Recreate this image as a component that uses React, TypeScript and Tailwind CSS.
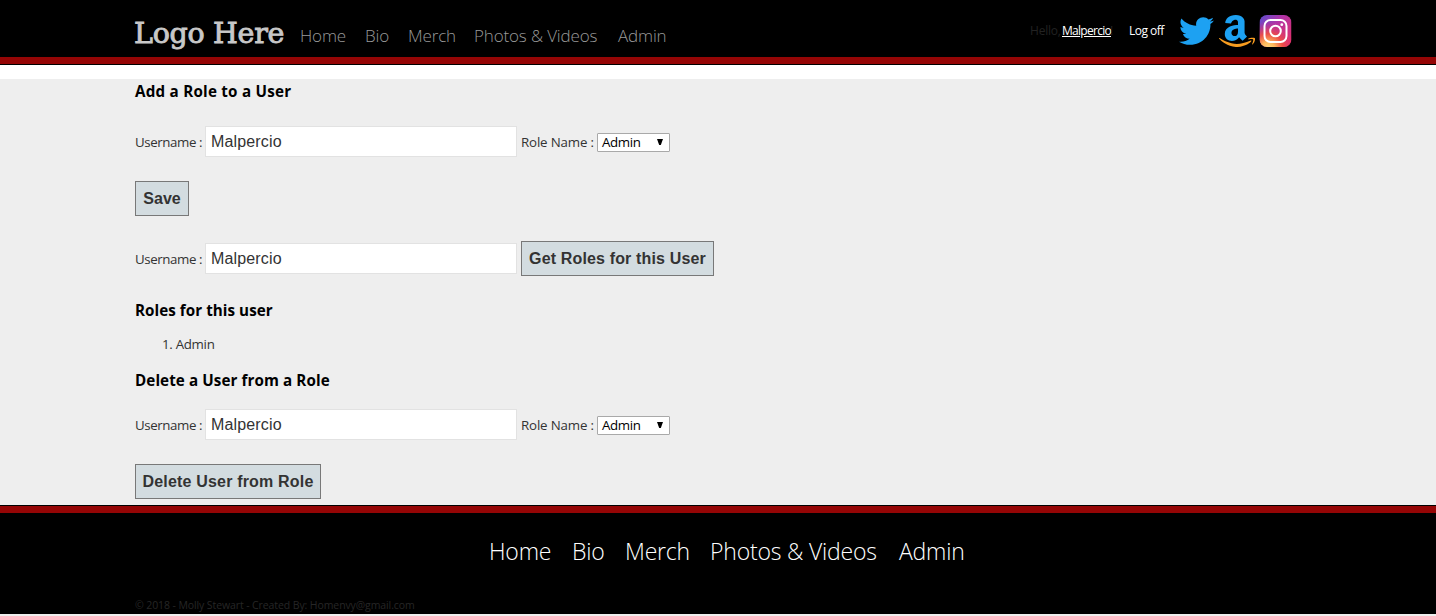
import type { ReactNode } from 'react';
import { FaTwitter } from 'react-icons/fa';

function AmazonIcon() {
  return (
    <svg className="ml-[5px] h-8 w-9" viewBox="7 32 433 448" preserveAspectRatio="none">
      <path
        fill="#1da1f2"
        fillRule="evenodd"
        transform="translate(-6 -2) scale(.94 1.07)"
        d="M257.2 162.7c-48.7 1.8-169.5 15.5-169.5 117.5 0 109.5 138.3 114 183.5 43.2 6.5 10.2 35.4 37.5 45.3 46.8l56.8-56S341 288.9 341 261.4V114.3C341 89 316.5 32 228.7 32 140.7 32 94 87 94 136.3l73.5 6.8c16.3-49.5 54.2-49.5 54.2-49.5 40.7-.1 35.5 29.8 35.5 69.1zm0 86.8c0 80-84.2 68-84.2 17.2 0-47.2 50.5-56.7 84.2-57.8v40.6z"
      />
      <path
        fill="#f79c1f"
        transform="translate(0 -67) scale(1 1.14)"
        d="M393.2 413c-7.7 10-70 67-174.5 67S34.2 408.5 9.7 379c-6.8-7.7 1-11.3 5.5-8.3C88.5 415.2 203 488.5 387.7 401c7.5-3.7 13.3 2 5.5 12zm39.8 2.2c-6.5 15.8-16 26.8-21.2 31-5.5 4.5-9.5 2.7-6.5-3.8s19.3-46.5 12.7-55c-6.5-8.3-37-4.3-48-3.2-10.8 1-13 2-14-.3-2.3-5.7 21.7-15.5 37.5-17.5 15.7-1.8 41-.8 46 5.7 3.7 5.1 0 27.1-6.5 43.1z"
      />
    </svg>
  );
}

function InstagramIcon() {
  return (
    <svg className="ml-[5px] h-8 w-8 -translate-x-[0.5px]" viewBox="0 0 32 32" fill="none">
      <defs>
        <linearGradient id="ig-base" x1="0" y1="0" x2="1" y2=".8">
          <stop offset="0" stopColor="#5b4fd0" />
          <stop offset=".45" stopColor="#b133a8" />
          <stop offset="1" stopColor="#e0306a" />
        </linearGradient>
        <radialGradient id="ig-warm" cx=".27" cy="1.05" r=".85">
          <stop offset="0" stopColor="#ffdc80" />
          <stop offset=".25" stopColor="#fdb75a" />
          <stop offset=".55" stopColor="#f0503f" stopOpacity=".9" />
          <stop offset="1" stopColor="#d62f7b" stopOpacity="0" />
        </radialGradient>
      </defs>
      <rect width="32" height="32" rx="7.5" fill="url(#ig-base)" />
      <rect width="32" height="32" rx="7.5" fill="url(#ig-warm)" />
      <rect x="5" y="5" width="22" height="22" rx="6" stroke="#fff" strokeWidth="2" />
      <circle cx="16" cy="16" r="5.3" stroke="#fff" strokeWidth="2" />
      <circle cx="22.3" cy="9.7" r="1.4" fill="#fff" />
    </svg>
  );
}

function Heading({ className = '', children }: { className?: string; children: ReactNode }) {
  return <h3 className={`h-6 text-[15.2px] leading-6 font-bold text-black ${className}`}>{children}</h3>;
}

function UsernameField({ children }: { children?: ReactNode }) {
  return (
    <div className="flex h-[35px] items-center">
      <label className="w-[70px] pt-0.5 text-[13.3px] tracking-[-0.4px]">Username :</label>
      <input
        className="h-[31px] w-[312px] border border-[#e2e2e2] bg-white px-[5px] font-['Liberation_Sans',sans-serif] text-base tracking-[0.15px] text-[#333] outline-none"
        defaultValue="Malpercio"
      />
      {children}
    </div>
  );
}

function RoleSelect() {
  return (
    <>
      <label className="ml-1 w-[76px] pt-0.5 text-[13.3px] tracking-[-0.15px]">Role Name :</label>
      <button className="mt-0.5 flex h-[19px] w-[73px] items-center justify-between rounded-[1px] border border-[#a9a9a9] bg-white pr-[6px] pl-1 text-[13.3px] tracking-[-0.35px] text-black">
        <span className="-mt-px leading-4">Admin</span>
        <svg className="-mt-px h-[6px] w-[6px]" viewBox="0 0 6 6">
          <path d="M0 0h6L3.8 6H2.2z" fill="#000" />
        </svg>
      </button>
    </>
  );
}

function Button({ className, children }: { className: string; children: ReactNode }) {
  return (
    <button
      className={`h-[35px] border border-[#787878] bg-[#d3dce0] font-['Liberation_Sans',sans-serif] text-base font-semibold text-[#333] ${className}`}
    >
      {children}
    </button>
  );
}

export default function App() {
  return (
    <div className="h-[616px] overflow-hidden bg-[#eee] font-['Open_Sans',sans-serif] text-[#333] whitespace-nowrap">
      <header className="border-b border-black bg-white">
        <div className="flex h-[57px] bg-black pl-[134px]">
          <a className="h-[57px] w-[166px] pt-[15px] font-['DejaVu_Serif',serif] text-[28.5px] leading-[38px] tracking-[-0.3px] text-[#c8c8c8] [-webkit-text-stroke:0.9px_#c8c8c8]">
            Logo Here
          </a>
          <nav className="flex w-[730px] pt-[24px] text-[17px] leading-[24px] font-light tracking-[-0.15px] text-[#999]">
            <a className="w-[65px]">Home</a>
            <a className="w-[43px]">Bio</a>
            <a className="w-[66px]">Merch</a>
            <a className="w-[144px]">Photos &amp; Videos</a>
            <a>Admin</a>
          </nav>
          <div className="flex w-[149px] pt-[22px] text-[12px] leading-[18px] tracking-[-0.5px]">
            <span className="w-[32px] tracking-[-0.2px] text-[#222]">Hello,</span>
            <a className="w-[48px] text-white underline tracking-[-0.72px]">Malpercio</a>
            <span className="flex-1 text-[#222]">!</span>
            <a className="w-[50px] text-white">Log off</a>
          </div>
          <div className="flex pt-[15px]">
            <FaTwitter className="h-[34px] w-[35px] -translate-y-px text-[#1da1f2]" preserveAspectRatio="none" />
            <AmazonIcon />
            <InstagramIcon />
          </div>
        </div>
        <div className="h-[7px] bg-[#950505]" />
      </header>
      <div className="h-[14px] bg-white" />
      <main className="h-[426px] bg-[#eee] pl-[135px]">
        <Heading className="tracking-[0.23px]">Add a Role to a User</Heading>
        <div className="pt-[21px]">
          <UsernameField>
            <RoleSelect />
          </UsernameField>
        </div>
        <Button className="mt-[22px] block w-[54px]">Save</Button>
        <div className="mt-[25px]">
          <UsernameField>
            <Button className="ml-1 w-[193px] tracking-[0.15px]">Get Roles for this User</Button>
          </UsernameField>
        </div>
        <div className="pt-[22px]">
          <Heading className="tracking-[0.05px]">Roles for this user</Heading>
        </div>
        <ol className="h-[46px] pt-[12px] pl-[27px] text-[13.3px] leading-5 tracking-[-0.3px]">
          <li>1. Admin</li>
        </ol>
        <Heading className="tracking-[0.09px]">Delete a User from a Role</Heading>
        <div className="pt-[15px]">
          <UsernameField>
            <RoleSelect />
          </UsernameField>
        </div>
        <Button className="mt-[22px] block w-[186px] tracking-[0.18px]">Delete User from Role</Button>
      </main>
      <footer className="h-[109px] border-t border-black bg-black">
        <div className="h-[7px] bg-[#950505]" />
        <nav className="flex h-[83px] pt-[22px] pl-[489px] text-[23px] leading-8 font-light tracking-[-0.2px] text-white">
          <a className="w-[83px]">Home</a>
          <a className="w-[53px]">Bio</a>
          <a className="w-[85px]">Merch</a>
          <a className="w-[189px]">Photos &amp; Videos</a>
          <a>Admin</a>
        </nav>
        <p className="pt-px pl-[135px] text-[10.5px] leading-4 tracking-[-0.1px] text-[#262626]">
          © 2018 - Molly Stewart - Created By: Homenvy@gmail.com
        </p>
      </footer>
    </div>
  );
}
